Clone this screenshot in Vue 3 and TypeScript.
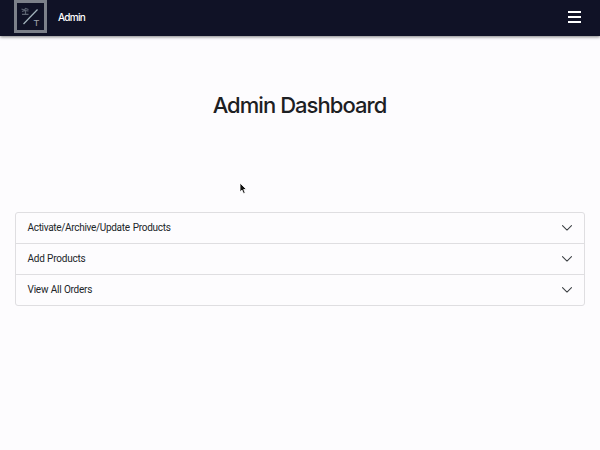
<script setup lang="ts">
const sections: string[] = ['Activate/Archive/Update Products', 'Add Products', 'View All Orders']
</script>

<template>
  <div class="page">
    <header class="navbar">
      <a class="brand">
        <svg class="logo" width="33" height="33" viewBox="0 0 33 33">
          <rect x="1.5" y="1.5" width="30" height="30" fill="#101226" stroke="#7c8089" stroke-width="3" />
          <path d="M9.500 24L23.500 9.500" stroke="#a4b5bd" stroke-width="1.200" />
          <path d="M7.500 9l3 1 1-1.500 3 1M8 11.500l3-1 3.500.500M11.500 10v4M8 14.300h6.500" fill="none" stroke="#5c6371" stroke-width="1.200" />
          <text x="22.500" y="25.500" text-anchor="middle" class="monogram">T</text>
        </svg>
        <span class="brand-name">Admin</span>
      </a>
      <button class="toggle" aria-label="Menu">
        <span></span><span></span><span></span>
      </button>
    </header>
    <main class="content">
      <h1>Admin Dashboard</h1>
      <div class="accordion">
        <button v-for="section in sections" :key="section" class="item">
          <span>{{ section }}</span>
          <svg width="12" height="12" viewBox="0 0 16 16">
            <path d="M2 4.700L8 10.700l6-6" fill="none" stroke="#3b3f43" stroke-width="1.400" stroke-linecap="round" stroke-linejoin="round" />
          </svg>
        </button>
      </div>
    </main>
    <svg class="cursor" width="9" height="13" viewBox="0 0 9 13">
      <path d="M1 1v9l2-1.900 1.500 3.400 1.700-.700-1.500-3.300h2.800z" fill="#111" stroke="#fff" stroke-width=".8" />
    </svg>
  </div>
</template>

<style>
body {
  background: #fdfcfe;
}
</style>

<style scoped>
.page {
  position: relative;
  height: 450px;
  overflow: hidden;
  background: #fdfcfe;
  color: #1d2023;
  font-family: Inter, "Liberation Sans", sans-serif;
}
.navbar {
  display: flex;
  align-items: flex-start;
  justify-content: space-between;
  box-sizing: border-box;
  height: 36px;
  padding: 0 19px 0 14px;
  background: #101226;
  box-shadow: 0 1px 3px rgba(0, 0, 0, 0.5);
}
.brand {
  display: flex;
  align-items: center;
  gap: 11px;
  color: #fff;
}
.logo {
  display: block;
}
.monogram {
  fill: #9da2ac;
  font: 400 9.5px "Liberation Sans", sans-serif;
}
.brand-name {
  font-size: 10px;
  line-height: 14px;
  font-weight: 500;
  letter-spacing: -0.7px;
}
.toggle {
  display: flex;
  flex-direction: column;
  gap: 3px;
  padding: 0;
  margin-top: 11px;
  border: 0;
  background: none;
}
.toggle span {
  width: 13px;
  height: 2px;
  background: #fff;
}
.content {
  padding: 0 15px;
}
h1 {
  margin: 0;
  padding: 55px 1px 92px 0;
  font-size: 22px;
  line-height: 29px;
  font-weight: 500;
  letter-spacing: -0.95px;
  text-align: center;
}
.accordion {
  border: 1px solid #dfdee1;
  border-radius: 3px;
}
.item {
  display: flex;
  align-items: center;
  justify-content: space-between;
  box-sizing: border-box;
  width: 100%;
  height: 31px;
  padding: 0 11.5px 2px;
  border: 0;
  border-bottom: 1px solid #dfdee1;
  background: none;
  color: #212529;
  font: 400 10px/15px Roboto, "Liberation Sans", sans-serif;
  letter-spacing: -0.22px;
  word-spacing: 0.2px;
}
.item:first-child {
  letter-spacing: -0.31px;
  word-spacing: 1px;
}
.item svg {
  position: relative;
  top: 1px;
}
.item:last-child {
  height: 30px;
  border-bottom: 0;
}
.cursor {
  position: absolute;
  left: 239px;
  top: 182px;
}
</style>
